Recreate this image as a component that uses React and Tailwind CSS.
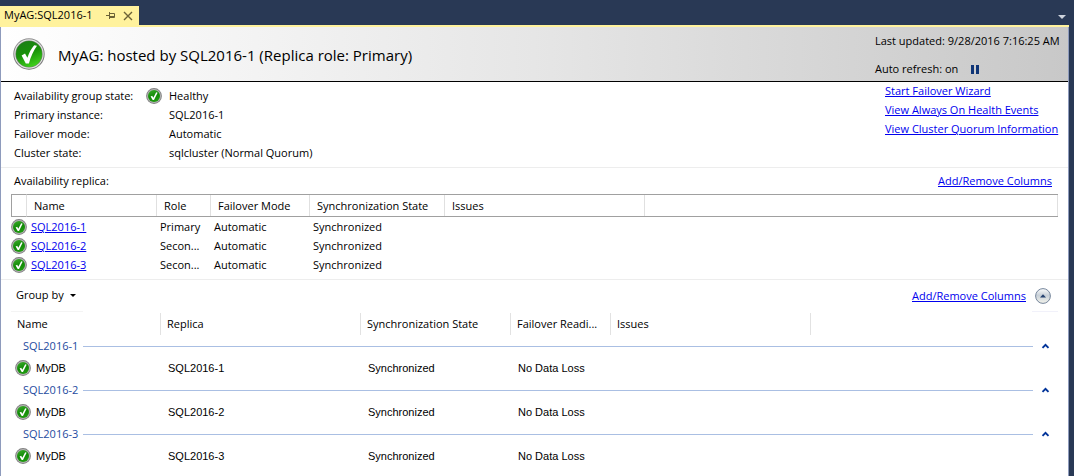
import { useId, useState } from "react";

const replicas = [
  { name: "SQL2016-1", role: "Primary", mode: "Automatic", state: "Synchronized" },
  { name: "SQL2016-2", role: "Secon...", mode: "Automatic", state: "Synchronized" },
  { name: "SQL2016-3", role: "Secon...", mode: "Automatic", state: "Synchronized" },
];

const summary = [
  { label: "Availability group state:", value: "Healthy", healthy: true },
  { label: "Primary instance:", value: "SQL2016-1" },
  { label: "Failover mode:", value: "Automatic" },
  { label: "Cluster state:", value: "sqlcluster (Normal Quorum)" },
];

const actions = ["Start Failover Wizard", "View Always On Health Events", "View Cluster Quorum Information"];

function HealthyIcon({ className }) {
  const id = useId();
  return (
    <svg viewBox="0 0 32 32" className={className} aria-hidden="true">
      <defs>
        <linearGradient id={`${id}rim`} x1="0" y1="0" x2="0" y2="1">
          <stop offset="0" stopColor="#8f8f8f" />
          <stop offset="1" stopColor="#6f6f6f" />
        </linearGradient>
        <linearGradient id={`${id}fill`} x1="0.2" y1="0" x2="0.6" y2="1">
          <stop offset="0" stopColor="#1d7d18" />
          <stop offset="0.5" stopColor="#189208" />
          <stop offset="1" stopColor="#3fd01c" />
        </linearGradient>
      </defs>
      <circle cx="16" cy="16" r="15.7" fill={`url(#${id}rim)`} />
      <circle cx="16" cy="16" r="14.7" fill="#e4e4e4" />
      <circle cx="16" cy="16" r="13.6" fill="#6d806a" />
      <circle cx="16" cy="16" r="13" fill={`url(#${id}fill)`} />
      <path d="M8.6 17.4 L12 15.6 L14.4 19.8 C16.2 14.4 18.6 10 21.2 7.2 L24 7.8 C20.6 12.4 17.9 18.4 15.9 25.4 L12.8 25.6 Z" fill="#fff" />
    </svg>
  );
}

function SmallHealthyIcon() {
  const id = useId();
  return (
    <svg viewBox="0 0 16 16" className="block size-4 shrink-0" aria-hidden="true">
      <defs>
        <linearGradient id={id} x1="0" y1="0" x2="0.4" y2="1">
          <stop offset="0" stopColor="#3fae2e" />
          <stop offset="0.6" stopColor="#118a06" />
          <stop offset="1" stopColor="#1f9a10" />
        </linearGradient>
      </defs>
      <circle cx="8" cy="8" r="7.9" fill="#808080" />
      <circle cx="8" cy="8" r="7" fill="#b4b4b4" />
      <circle cx="8" cy="8" r="6" fill={`url(#${id})`} />
      <path d="M4.6 8.4 L6.2 7.7 L7.3 9.7 L10.2 4.3 L11.6 4.7 L8 12 L6.7 12 Z" fill="#fff" />
    </svg>
  );
}

function TextLink({ children }) {
  return (
    <a href="#" className="text-[#0000ee] underline underline-offset-1">
      {children}
    </a>
  );
}

function ReplicaHead({ children }) {
  return (
    <th className="border-y border-[#a0a0a0] p-0 text-left font-normal">
      <div className="h-[21px] truncate border-r border-[#e0e0e0] pl-[7px] leading-[21px]">{children}</div>
    </th>
  );
}

function DatabaseHead({ children }) {
  return (
    <th className="h-[22px] border-r border-[#e2e2e2] py-0 pl-1.5 text-left font-normal whitespace-nowrap">
      {children}
    </th>
  );
}

function DatabaseGroup({ name }) {
  const [open, setOpen] = useState(true);
  return (
    <tbody className="font-['Liberation_Sans',sans-serif]">
      <tr>
        <th colSpan={6} scope="rowgroup" className="p-0 font-normal">
          <div className="flex h-[22px] items-center pr-2 pl-3">
            <span className="w-[60px] text-left font-['Open_Sans','Noto_Sans',sans-serif] whitespace-nowrap text-[#1e4ba0]">
              {name}
            </span>
            <span className="h-px flex-1 bg-[#aabfe3]" />
            <button
              type="button"
              aria-label={`Toggle ${name}`}
              onClick={() => setOpen(!open)}
              className="ml-2 flex h-4 w-[9px] items-center"
            >
              <svg viewBox="0 0 9 6" className={open ? "h-1.5 w-[9px]" : "h-1.5 w-[9px] rotate-180"} aria-hidden="true">
                <path d="M1.5 4.8 L4.5 1.8 L7.5 4.8" fill="none" stroke="#003399" strokeWidth="1.9" />
              </svg>
            </button>
          </div>
        </th>
      </tr>
      {open && (
        <tr>
          <td className="h-[22px] p-0 pl-1">
            <div className="flex items-center gap-[5px]">
              <SmallHealthyIcon />
              MyDB
            </div>
          </td>
          <td className="p-0 pl-[7px]">{name}</td>
          <td className="p-0 pl-[7px]">Synchronized</td>
          <td className="p-0 pl-[7px]" colSpan={3}>
            No Data Loss
          </td>
        </tr>
      )}
    </tbody>
  );
}

export default function App() {
  return (
    <div className="flex min-h-screen flex-col bg-[#293955] pr-[5px] font-['Open_Sans','Noto_Sans',sans-serif] text-[11px] text-black">
      <div className="flex h-[25px] items-end justify-between">
        <div className="flex h-[19px] items-center bg-[#fff29d] pr-1.5 pl-1">
          <span className="w-[102px] whitespace-nowrap">MyAG:SQL2016-1</span>
          <button type="button" aria-label="Pin tab" className="mr-2 flex">
            <svg viewBox="0 0 9 9" className="size-[9px]" fill="none" stroke="#6b6236" aria-hidden="true">
              <path d="M0 4.5 H3 M3.5 1 V8 M3.5 2.5 H8.5 V6.5 H3.5 M3.5 5.5 H8.5" />
            </svg>
          </button>
          <button type="button" aria-label="Close tab" className="flex">
            <svg viewBox="0 0 10 10" className="size-2.5" fill="none" stroke="#6b6236" strokeWidth="1.4" aria-hidden="true">
              <path d="M1 1 L9 9 M9 1 L1 9" />
            </svg>
          </button>
        </div>
        <button type="button" aria-label="Active files" className="mr-[3px] flex h-4 items-center">
          <svg viewBox="0 0 8 4" className="h-1 w-2" aria-hidden="true">
            <path d="M0 0 H8 L4 4 Z" fill="#ced4dd" />
          </svg>
        </button>
      </div>

      <main className="flex-1 border-t-2 border-t-[#fff29d] bg-white">
        <div className="min-h-[449px] border-x border-[#8e9bbc]">
          <header className="flex h-[55px] items-center justify-between border-b border-black bg-linear-to-r from-white via-[#e6e6e6] to-[#c8c8c8] pl-3">
            <div className="flex items-center gap-[13px]">
              <HealthyIcon className="size-8" />
              <h1 className="pt-0.5 text-[15px]">MyAG: hosted by SQL2016-1 (Replica role: Primary)</h1>
            </div>
            <div className="w-[193px] pt-0.5 whitespace-nowrap">
              <p className="leading-7">Last updated: 9/28/2016 7:16:25 AM</p>
              <div className="flex items-center gap-[13px] leading-7">
                Auto refresh: on
                <button type="button" aria-label="Pause auto refresh" className="flex">
                  <svg viewBox="0 0 8 9" className="h-[9px] w-2" fill="#0f3577" aria-hidden="true">
                    <path d="M0 0 H3 V9 H0 Z M5 0 H8 V9 H5 Z" />
                  </svg>
                </button>
              </div>
            </div>
          </header>

          <section className="flex justify-between border-b border-[#ededed] pl-[13px]">
            <dl className="pt-1 pb-[5px] leading-[19px]">
              {summary.map((item) => (
                <div key={item.label} className="flex">
                  <dt className="w-[132px]">{item.label}</dt>
                  <dd className="flex items-center">
                    <span className="w-[23px]">{item.healthy && <SmallHealthyIcon />}</span>
                    {item.value}
                  </dd>
                </div>
              ))}
            </dl>
            <nav className="flex w-[183px] flex-col gap-0.5 leading-[17px] whitespace-nowrap">
              {actions.map((label) => (
                <TextLink key={label}>{label}</TextLink>
              ))}
            </nav>
          </section>

          <section className="border-b border-[#ededed] px-2.5 pb-[5px]">
            <div className="flex h-[26px] items-center justify-between pr-1.5 pl-[3px]">
              <h2>Availability replica:</h2>
              <TextLink>Add/Remove Columns</TextLink>
            </div>
            <table className="w-full table-fixed border-separate border-spacing-0">
              <colgroup>
                <col className="w-4" />
                <col className="w-[130px]" />
                <col className="w-[54px]" />
                <col className="w-[99px]" />
                <col className="w-[135px]" />
                <col className="w-[200px]" />
                <col />
              </colgroup>
              <thead>
                <tr>
                  <th aria-label="Health" className="border border-[#a0a0a0] border-r-[#e0e0e0] p-0" />
                  <ReplicaHead>Name</ReplicaHead>
                  <ReplicaHead>Role</ReplicaHead>
                  <ReplicaHead>Failover Mode</ReplicaHead>
                  <ReplicaHead>Synchronization State</ReplicaHead>
                  <ReplicaHead>Issues</ReplicaHead>
                  <ReplicaHead />
                </tr>
              </thead>
              <tbody className="leading-[19px]">
                {replicas.map((r) => (
                  <tr key={r.name}>
                    <td className="p-0">
                      <SmallHealthyIcon />
                    </td>
                    <td className="p-0 pl-1">
                      <TextLink>{r.name}</TextLink>
                    </td>
                    <td className="p-0 pl-[3px] whitespace-nowrap">{r.role}</td>
                    <td className="p-0 pl-[3px]">{r.mode}</td>
                    <td className="p-0 pl-[3px]" colSpan={3}>
                      {r.state}
                    </td>
                  </tr>
                ))}
              </tbody>
            </table>
          </section>

          <section className="px-2.5">
            <div className="mb-px flex h-8 justify-between">
              <button type="button" className="flex w-[72px] items-center gap-1.5 border-b border-[#f4f4f4] pl-[5px]">
                Group by
                <svg viewBox="0 0 6 3" className="h-[3px] w-1.5" aria-hidden="true">
                  <path d="M0 0 H6 L3 3 Z" fill="#000" />
                </svg>
              </button>
              <div className="flex items-center gap-1.5">
                <TextLink>Add/Remove Columns</TextLink>
                <button
                  type="button"
                  aria-label="Collapse section"
                  className="flex h-full w-[26px] items-center justify-start border-b border-[#f1f1fa] pl-[3px]"
                >
                  <svg viewBox="0 0 16 16" className="size-4" aria-hidden="true">
                    <defs>
                      <linearGradient id="collapse-fill" x1="0" y1="0" x2="0" y2="1">
                        <stop offset="0" stopColor="#fdfefe" />
                        <stop offset="0.45" stopColor="#c8d0d8" />
                        <stop offset="1" stopColor="#f4f4ec" />
                      </linearGradient>
                    </defs>
                    <circle cx="8" cy="8" r="7.4" fill="url(#collapse-fill)" stroke="#76869c" />
                    <path d="M5 9.6 L8 6.2 L11 9.6 Z" fill="#25416f" />
                  </svg>
                </button>
              </div>
            </div>
            <table className="w-full table-fixed border-separate border-spacing-0">
              <colgroup>
                <col className="w-[150px]" />
                <col className="w-[200px]" />
                <col className="w-[150px]" />
                <col className="w-[100px]" />
                <col className="w-[200px]" />
                <col />
              </colgroup>
              <thead>
                <tr>
                  <DatabaseHead>Name</DatabaseHead>
                  <DatabaseHead>Replica</DatabaseHead>
                  <DatabaseHead>Synchronization State</DatabaseHead>
                  <DatabaseHead>Failover Readi...</DatabaseHead>
                  <DatabaseHead>Issues</DatabaseHead>
                  <th className="p-0" />
                </tr>
              </thead>
              {replicas.map((r) => (
                <DatabaseGroup key={r.name} name={r.name} />
              ))}
            </table>
          </section>
        </div>
      </main>
    </div>
  );
}
